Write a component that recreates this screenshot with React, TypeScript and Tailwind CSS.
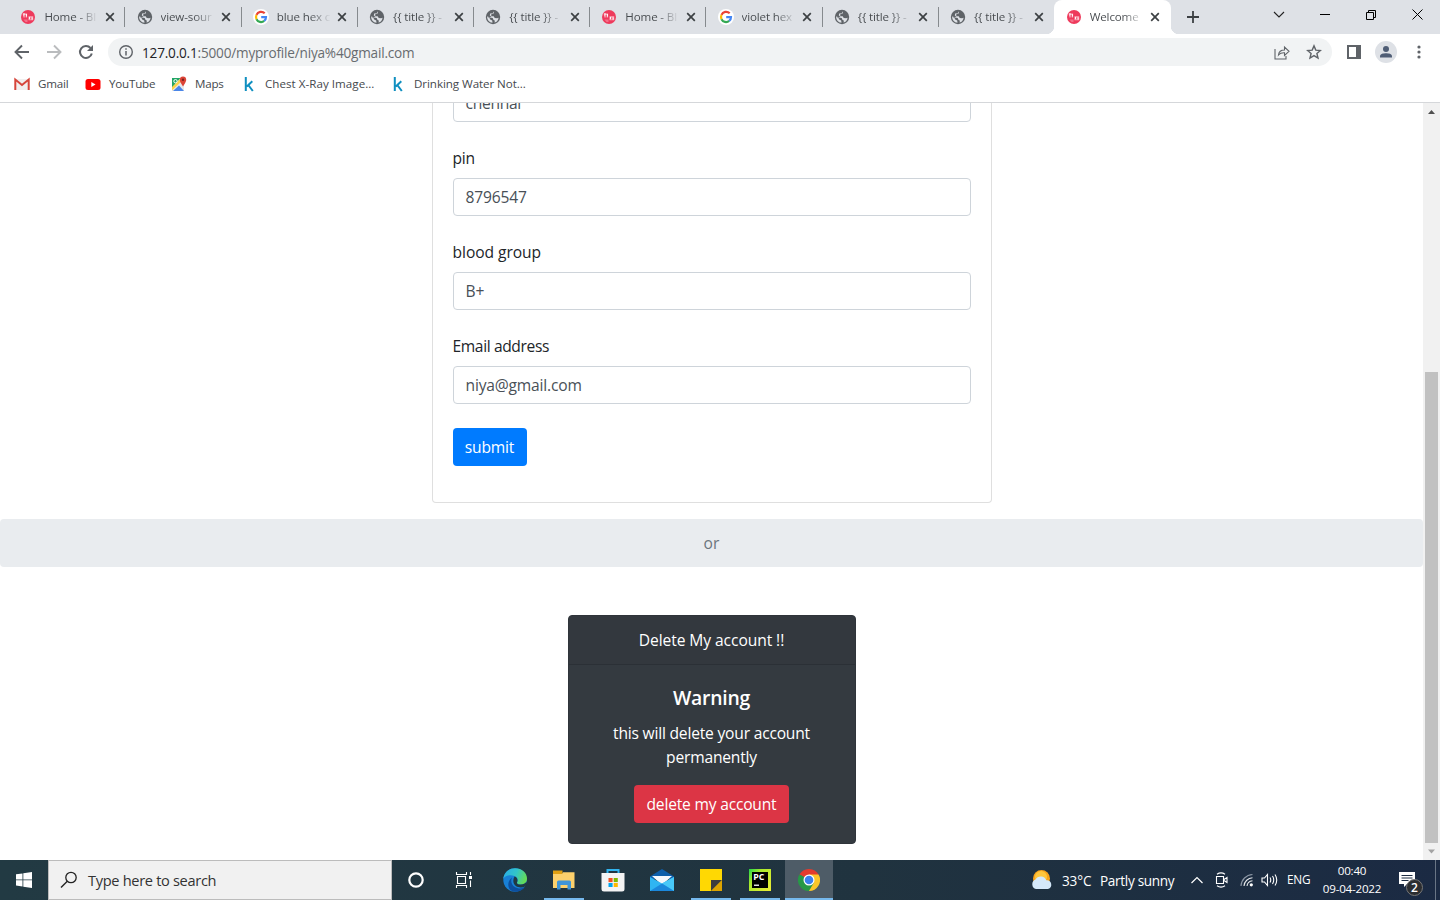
import React from "react";

type TabInfo = { icon: "blood" | "globe" | "google"; title: string; active?: boolean };

const tabs: TabInfo[] = [
  { icon: "blood", title: "Home - Bl" },
  { icon: "globe", title: "view-sour" },
  { icon: "google", title: "blue hex c" },
  { icon: "globe", title: "{{ title }} -" },
  { icon: "globe", title: "{{ title }} -" },
  { icon: "blood", title: "Home - Bl" },
  { icon: "google", title: "violet hex" },
  { icon: "globe", title: "{{ title }} -" },
  { icon: "globe", title: "{{ title }} -" },
  { icon: "blood", title: "Welcome", active: true },
];

function BloodIcon() {
  return (
    <svg width="16" height="16" viewBox="0 0 16 16">
      <circle cx="8" cy="8" r="7" fill="#ee3a5c" />
      <path d="M2.600 4.500h4.500v4H3.500zM8.500 7.300h4.700v4H8.500z" fill="#f9a9b9" />
      <path d="M4 4v2.500M6.500 5v2.500M9.500 8v2M12 8.500v2" stroke="#fff" strokeWidth="0.900" />
      <path d="M5.200 6v3M10.800 8.500v2" stroke="#ee3a5c" strokeWidth="0.900" />
      <path d="M3.500 10.500h4v2.500h-2z" fill="#f4708a" />
    </svg>
  );
}

function GlobeIcon() {
  return (
    <svg width="16" height="16" viewBox="0 0 16 16">
      <circle cx="8" cy="8" r="7.200" fill="#5f6368" />
      <path d="M8.800 2.200L7.800 4l-2.600.6-.4 1.900 1.300.8h2.600l1 1.700 2.400.3 1.500-.6Q13 12.500 9.500 13.600l.4-1.800-1.500-1.100-.7-1.700-2.600-.4-2.900-1.300Q1.800 9 3 11.200q2 2.500 4.500 2.600l-.3-2.200-2-1-.7-1.600-2-1.200 2.700.3 1-.5.200-2.800 2.400-.4z" fill="#dee1e6" />
    </svg>
  );
}

function GoogleIcon() {
  return (
    <svg width="16" height="16" viewBox="0 0 16 16">
      <circle cx="8" cy="8" r="8" fill="#fff" />
      <g fill="none" strokeWidth="2.200">
        <path d="M11.700 4.300A5 5 0 0 0 3.500 5.900" stroke="#ea4335" />
        <path d="M3.500 5.900a5 5 0 0 0 0 4.300" stroke="#fbbc05" />
        <path d="M3.500 10.200a5 5 0 0 0 7.700 1.700" stroke="#34a853" />
        <path d="M11.200 11.900A4.700 4.700 0 0 0 13 8.100H8.200" stroke="#4285f4" />
      </g>
    </svg>
  );
}

function CloseX() {
  return (
    <svg width="10" height="10" viewBox="0 0 10 10" className="shrink-0">
      <path d="M1.200 1.200l7.600 7.600M8.800 1.200L1.200 8.800" stroke="#3c4043" strokeWidth="1.700" />
    </svg>
  );
}

function Tab({ tab, last }: { tab: TabInfo; last: boolean }) {
  const icon = tab.icon === "blood" ? <BloodIcon /> : tab.icon === "globe" ? <GlobeIcon /> : <GoogleIcon />;
  return (
    <div className={tab.active ? "relative flex h-[34px] w-[117px] shrink-0 items-center rounded-t-lg bg-white pl-3" : "relative flex h-[34px] w-[116.2px] shrink-0 items-center pl-[12.4px]"}>
      <span className="shrink-0">{icon}</span>
      <span
        className={
          tab.active
            ? "ml-2 w-[51px] shrink-0 overflow-hidden whitespace-nowrap bg-linear-to-r from-[#45494d] from-65% to-[#e8e8e8] bg-clip-text text-[11.6px] leading-4 tracking-[-0.15px] text-transparent"
            : "ml-2 w-[54px] shrink-0 overflow-hidden whitespace-nowrap bg-linear-to-r from-[#45494d] from-60% to-[#dee1e6] to-100% bg-clip-text text-[11.6px] leading-4 tracking-[-0.15px] text-transparent"
        }
      >
        {tab.title}
      </span>
      <span className={tab.active ? "ml-[9px]" : "ml-[6.6px]"}>
        <CloseX />
      </span>
      {!tab.active && !last && <span className="-mr-[1.3px] ml-auto h-5 w-px bg-[#868a8e]" />}
      {tab.active && (
        <>
          <span className="absolute bottom-0 -left-2 size-2 bg-[radial-gradient(circle_at_0_0,#dee1e6_8px,#fff_8.5px)]" />
          <span className="absolute -right-2 bottom-0 size-2 bg-[radial-gradient(circle_at_100%_0,#dee1e6_8px,#fff_8.5px)]" />
        </>
      )}
    </div>
  );
}

function TabStrip() {
  return (
    <div className="flex h-[34px] shrink-0 bg-[#dee1e6] pl-2">
      {tabs.map((t, i) => (
        <Tab key={i} tab={t} last={i === 8} />
      ))}
      <div className="flex w-[44px] items-center justify-center">
        <svg width="12" height="12" viewBox="0 0 12 12">
          <path d="M6 0v12M0 6h12" stroke="#3c4043" strokeWidth="1.800" />
        </svg>
      </div>
      <div className="ml-auto flex h-[29px] items-center">
        <div className="flex w-[46px] justify-center">
          <svg width="12" height="8" viewBox="0 0 12 8">
            <path d="M1 1l5 5 5-5" fill="none" stroke="#222" strokeWidth="1.100" />
          </svg>
        </div>
        <div className="flex w-[46px] justify-center">
          <svg width="10" height="10" viewBox="0 0 10 10">
            <path d="M0 4.500h10" stroke="#000" />
          </svg>
        </div>
        <div className="flex w-[46px] justify-center">
          <svg width="10" height="10" viewBox="0 0 10 10">
            <path d="M.5 2.500h7v7h-7zM2.500 2.500v-2h7v7h-2" fill="none" stroke="#000" />
          </svg>
        </div>
        <div className="flex w-[46px] justify-center">
          <svg width="11" height="11" viewBox="0 0 11 11">
            <path d="M.5.5l10 10M10.500.5l-10 10" stroke="#000" />
          </svg>
        </div>
      </div>
    </div>
  );
}

function Toolbar() {
  return (
    <div className="flex h-9 shrink-0 items-center bg-white pl-[14px]">
      <svg width="16" height="16" viewBox="0 0 16 16">
        <path d="M15 8H2M8 1.500L1.500 8 8 14.500" fill="none" stroke="#5f6368" strokeWidth="1.900" />
      </svg>
      <svg width="16" height="16" viewBox="0 0 16 16" className="ml-4">
        <path d="M1 8h13M8 1.500L14.500 8 8 14.500" fill="none" stroke="#babcbe" strokeWidth="1.900" />
      </svg>
      <svg width="16" height="16" viewBox="0 0 16 16" className="ml-4">
        <path d="M13.800 9.500A6 6 0 1 1 12.500 4" fill="none" stroke="#5f6368" strokeWidth="2" />
        <path d="M15 1v6H9z" fill="#5f6368" />
      </svg>
      <div className="ml-[14px] flex h-7 w-[1224px] items-center rounded-full bg-[#f1f3f4] pr-[10px] pl-[10px]">
        <svg width="16" height="16" viewBox="0 0 16 16">
          <circle cx="8" cy="8" r="6.300" fill="none" stroke="#5f6368" strokeWidth="1.400" />
          <path d="M8 7v4.500M8 4.300v1.500" stroke="#5f6368" strokeWidth="1.500" />
        </svg>
        <span className="ml-2 pt-px text-[13.600px] leading-5 tracking-[-0.200px] text-[#686c70]">
          <span className="text-[#202124]">127.0.0.1</span>:5000/myprofile/niya%40gmail.com
        </span>
        <svg width="16" height="16" viewBox="0 0 16 16" className="ml-auto">
          <path d="M1 5v10h11v-3M4.500 11q.5-5 6-5V3l4.500 4.300-4.500 4.200V8.800Q6.500 8.600 4.500 11z" fill="none" stroke="#5f6368" strokeWidth="1.100" />
        </svg>
        <svg width="16" height="16" viewBox="0 0 16 16" className="ml-4">
          <path d="M8 1.900l1.800 4.200 4.600.4-3.500 3 1.100 4.500-4-2.400L4 14l1.100-4.500-3.500-3 4.600-.4z" fill="none" stroke="#5f6368" strokeWidth="1.400" />
        </svg>
      </div>
      <svg width="14" height="14" viewBox="0 0 14 14" className="ml-[15px]">
        <path d="M0 0h14v14H0zM2 2v10h7V2z" fillRule="evenodd" fill="#5f6368" />
      </svg>
      <svg width="22" height="22" viewBox="0 0 22 22" className="ml-[14px]">
        <circle cx="11" cy="11" r="11" fill="#dee1e6" />
        <circle cx="11" cy="8" r="3" fill="#4f5d75" />
        <path d="M5 16.500v-1.300C5 12.800 8.500 12.200 11 12.200s6 .6 6 3v1.300z" fill="#4f5d75" />
      </svg>
      <svg width="4" height="14" viewBox="0 0 4 14" className="ml-5">
        <g fill="#5f6368">
          <circle cx="2" cy="2" r="1.600" />
          <circle cx="2" cy="7" r="1.600" />
          <circle cx="2" cy="12" r="1.600" />
        </g>
      </svg>
    </div>
  );
}

function KIcon() {
  return (
    <svg width="16" height="16" viewBox="0 0 16 16">
      <path d="M4.800 1v14M11.300 5.300L5.800 10.500M7.300 9L11.800 15" fill="none" stroke="#0f8fc0" strokeWidth="2" />
    </svg>
  );
}

function Bookmarks() {
  return (
    <div className="flex h-[33px] shrink-0 items-center border-b border-[#d5d7da] bg-white pb-1 pl-[14px] text-[11.600px] tracking-[-0.200px] text-[#45494d]">
      <div className="flex w-[71px] items-center">
        <svg width="16" height="16" viewBox="0 0 16 16">
          <path d="M1 3h14v11H1z" fill="#f1efef" />
          <path d="M1.300 14V3.500L8 9l6.700-5.500V14" fill="none" stroke="#d6453b" strokeWidth="2" />
        </svg>
        <span className="ml-2">Gmail</span>
      </div>
      <div className="flex w-[87px] items-center">
        <svg width="16" height="16" viewBox="0 0 16 16">
          <rect x="0.500" y="3" width="15" height="11" rx="2.500" fill="#f00" />
          <path d="M6.300 6v5l4.200-2.500z" fill="#fff" />
        </svg>
        <span className="ml-2">YouTube</span>
      </div>
      <div className="flex w-[69px] items-center">
        <svg width="16" height="16" viewBox="0 0 16 16" className="-ml-px">
          <path d="M1 2h12v13H1z" fill="#e7e9ec" />
          <path d="M1 2h8.500L1 12z" fill="#22a565" />
          <path d="M2 15l6-5.500 5 5.500z" fill="#4a86e8" />
          <path d="M1 11l8-8 1.500 2.500L1 14.500z" fill="#fbd24d" />
          <circle cx="4.500" cy="5.200" r="1.700" fill="none" stroke="#fff" />
          <path d="M12 10.500Q8.800 6 8.800 3.800a3.200 3.400 0 0 1 6.400 0q0 2.200-3.200 6.700z" fill="#dc4437" />
          <circle cx="12" cy="3.800" r="1.200" fill="#7b231e" />
        </svg>
        <span className="ml-2">Maps</span>
      </div>
      <div className="flex w-[149px] items-center">
        <KIcon />
        <span className="ml-2 tracking-[0.030px]">Chest X-Ray Image...</span>
      </div>
      <div className="flex items-center">
        <KIcon />
        <span className="ml-2 tracking-[-0.070px]">Drinking Water Not...</span>
      </div>
    </div>
  );
}

function Field({ label, value, labelClass }: { label: string; value: string; labelClass: string }) {
  return (
    <div className="mt-6">
      <div className="mb-2 h-6 text-[15.600px] leading-6 text-[#212529]">
        <span className={labelClass}>{label}</span>
      </div>
      <div className="flex h-[38px] items-center rounded border border-[#ced4da] px-3 pt-0.5 text-[15.600px] tracking-[-0.180px] text-[#495057]">{value}</div>
    </div>
  );
}

function Page() {
  return (
    <div className="flex h-[757px] shrink-0 overflow-hidden bg-white">
      <div className="flex w-[1423px] flex-col items-center overflow-hidden">
        <div className="h-[400px] w-[560px] shrink-0 rounded-b border border-t-0 border-[#dfdfdf] px-5">
          <div className="-mt-[19px] flex h-[38px] items-center rounded border border-[#ced4da] px-3 pt-0.5 text-[15.600px] tracking-[-0.300px] text-[#495057]">chennai</div>
          <Field label="pin" value="8796547" labelClass="tracking-[-0.200px]" />
          <Field label="blood group" value="B+" labelClass="tracking-[-0.050px]" />
          <Field label="Email address" value="niya@gmail.com" labelClass="tracking-[-0.380px]" />
          <button className="mt-6 flex h-[38px] w-[74px] items-center justify-center rounded bg-[#007bff] pt-0.5 text-[15.600px] tracking-[-0.200px] text-white">submit</button>
        </div>
        <div className="mt-4 flex h-12 w-full shrink-0 items-center justify-center rounded bg-[#e9ecef] pt-0.5 text-[15.600px] text-[#6c757d]">or</div>
        <div className="mt-12 flex h-[229px] w-[288px] shrink-0 flex-col items-center rounded border border-[#2f343a] bg-[#343a40] text-[15.600px] leading-6 tracking-[-0.200px] text-white">
          <div className="flex h-[49px] w-full items-center justify-center rounded-t border-b border-[#2b3036] bg-[#33383e] tracking-[-0.080px]">Delete My account !!</div>
          <div className="mt-[21px] text-[19.400px] leading-6 font-semibold tracking-[-0.250px]">Warning</div>
          <div className="mt-[11px] w-[246px] text-center">this will delete your account permanently</div>
          <button className="mt-4 flex h-[38px] w-[155px] items-center justify-center rounded bg-[#dc3545]">delete my account</button>
        </div>
      </div>
      <div className="flex w-[17px] flex-col items-center bg-[#f1f1f1]">
        <svg width="17" height="17" viewBox="0 0 17 17">
          <path d="M5 11h7L8.500 7z" fill="#505050" />
        </svg>
        <div className="mt-[252px] h-[471px] w-[13px] bg-[#c1c1c1]" />
        <svg width="17" height="17" viewBox="0 0 17 17">
          <path d="M5 6.500h7L8.500 10.500z" fill="#a3a3a3" />
        </svg>
      </div>
    </div>
  );
}

function AppSlot({ children, open, active }: { children: React.ReactNode; open?: boolean; active?: boolean }) {
  return (
    <div className={active ? "ml-px flex h-10 w-12 flex-col items-center bg-[#4e5c67]" : "ml-px flex h-10 w-12 flex-col items-center"}>
      <div className="flex h-[38px] items-center pt-0.5">{children}</div>
      {active ? <div className="h-0.5 w-12 bg-[#76b9ed]" /> : open ? <div className="h-0.5 w-10 bg-[#76b9ed]" /> : null}
    </div>
  );
}

function Taskbar() {
  return (
    <div className="flex h-10 shrink-0 items-center bg-linear-to-r from-[#223a43] via-[#20333f] via-60% to-[#1b2a43] text-white">
      <div className="flex w-12 justify-center">
        <svg width="16" height="16" viewBox="0 0 16 16" fill="#fff">
          <path d="M0 2.300L6.500 1.400v6.100H0zM7.300 1.300L16 0v7.500H7.300zM0 8.300h6.500v6.200L0 13.600zM7.300 8.300H16V16l-8.700-1.300z" />
        </svg>
      </div>
      <div className="flex h-10 w-[344px] items-center border border-[#bcbcbc] bg-[#f1f1f1] pl-[11px]">
        <svg width="18" height="18" viewBox="0 0 18 18">
          <circle cx="11" cy="6.500" r="5.200" fill="none" stroke="#222" strokeWidth="1.300" />
          <path d="M7.300 10.200L1 16.500" stroke="#222" strokeWidth="1.400" />
        </svg>
        <span className="ml-[10px] pt-0.5 text-[14.600px] tracking-[-0.320px] text-[#333]">Type here to search</span>
      </div>
      <div className="flex w-12 justify-center">
        <svg width="16" height="16" viewBox="0 0 16 16">
          <circle cx="8" cy="8" r="6.700" fill="none" stroke="#fff" strokeWidth="2.200" />
        </svg>
      </div>
      <div className="flex w-[50px] pl-[15px]">
        <svg width="17" height="16" viewBox="0 0 17 16">
          <path d="M2.500 4.500h8v7h-8zM1.500 0v2.500h10V0M1.500 16v-2.500h10V16M15.500 0v3M15.500 8.500V15" fill="none" stroke="#fff" strokeWidth="1.100" />
          <path d="M14 4h3v3h-3z" fill="#fff" />
        </svg>
      </div>
      <AppSlot>
        <svg width="24" height="24" viewBox="0 0 24 24">
          <defs>
            <linearGradient id="edgeTop" x1="0" x2="1" y1="0.300" y2="0.600">
              <stop offset="0" stopColor="#2aaee6" />
              <stop offset="0.500" stopColor="#32c5c8" />
              <stop offset="1" stopColor="#68dd4e" />
            </linearGradient>
          </defs>
          <circle cx="12" cy="12" r="11.700" fill="#1880d6" />
          <path d="M.3 11C1 4 6 .2 12 .2c7 0 12 4.800 12 10.300 0 4-3 6-6.200 6-2.700 0-4.300-1-3.800-2 1.400-2.200.8-5.500-2.500-6.500C7 6.500 2 7.500.3 11z" fill="url(#edgeTop)" />
          <path d="M9 9.500c-2.300 5 1 10.500 7 10.900 2.500.2 4.500-.7 6-1.700C19 23 14 24.500 9.500 23.300 4 21 4 13 9 9.500z" fill="#0d4f9e" />
          <path d="M11.500 8.500c3 .5 3.500 4 2.500 6-.5 1 1 2 3.800 2 2.500 0 4.500-1 5.500-2.500q1 1.500-1 4.300-3 1.800-5.800 1c-5-.5-8-5.500-5-10.800z" fill="#203842" />
        </svg>
      </AppSlot>
      <AppSlot open>
        <svg width="22" height="20" viewBox="0 0 22 20">
          <path d="M0 0.500h9.500V5H0z" fill="#e1a012" />
          <path d="M0 4h9l1-1.700h11.500V18H0z" fill="#fdd16c" />
          <path d="M4 19.500V12q0-1.500 1.500-1.500h11Q18 10.500 18 12v7.500h-3.500V15h-7v4.500z" fill="#3f95d8" />
        </svg>
      </AppSlot>
      <AppSlot>
        <svg width="24" height="24" viewBox="0 0 24 24">
          <path d="M6.500 6V2h11v4" fill="none" stroke="#31b4ee" strokeWidth="2" />
          <path d="M.5 5h23v16q0 2.500-2.500 2.500H3Q.5 23.500.5 21z" fill="#f4f4f4" />
          <path d="M7.500 10h4.100v4.100H7.500z" fill="#f25022" />
          <path d="M12.700 10h4.100v4.100h-4.100z" fill="#7fba00" />
          <path d="M7.500 15h4.100v4H7.500z" fill="#00a4ef" />
          <path d="M12.700 15h4.100v4h-4.100z" fill="#ffb900" />
        </svg>
      </AppSlot>
      <AppSlot>
        <svg width="24" height="22" viewBox="0 0 24 22">
          <path d="M0 7.500L12 0l12 7.500V10H0z" fill="#0d5eaa" />
          <path d="M2 7h20l-10 9z" fill="#f4f8fc" />
          <path d="M0 8l12 6.500L24 8v14H0z" fill="#2fb5f2" />
          <path d="M12 14.500L24 8v14z" fill="#48c8f8" />
          <path d="M0 22l12-7.500L24 22z" fill="#1b88dc" />
        </svg>
      </AppSlot>
      <AppSlot open>
        <svg width="22" height="22" viewBox="0 0 22 22">
          <path d="M0 0h22v11L11 22H0z" fill="#ffd803" />
          <path d="M11 11h11L11 22z" fill="#3c3c3e" />
          <path d="M22 11v11H11z" fill="#dda300" />
        </svg>
      </AppSlot>
      <AppSlot open>
        <svg width="22" height="22" viewBox="0 0 22 22">
          <defs>
            <linearGradient id="pcEdge" x1="0" x2="1" y1="0" y2="0.800">
              <stop offset="0" stopColor="#21d749" />
              <stop offset="0.350" stopColor="#a8e92c" />
              <stop offset="1" stopColor="#e7ec35" />
            </linearGradient>
          </defs>
          <path d="M0 0h22v22H0z" fill="url(#pcEdge)" />
          <path d="M3 3h16v16H3z" fill="#000" />
          <text x="4.200" y="11.300" fill="#fff" fontSize="8.800" fontWeight="700" fontFamily="Open Sans, sans-serif">PC</text>
          <path d="M5 15.500h5V17H5z" fill="#ddd" />
        </svg>
      </AppSlot>
      <AppSlot active>
        <svg width="22" height="22" viewBox="0 0 22 22">
          <path d="M11 11L1.470 5.500A11 11 0 0 1 20.530 5.500z" fill="#e33b2e" />
          <path d="M11 11L1.470 5.500A11 11 0 0 0 11 22l4.800-8.200z" fill="#279847" />
          <path d="M11 11V5.500h9.530A11 11 0 0 1 11 22z" fill="#fcc629" />
          <path d="M6.200 13.800L1.470 5.500 11 11z" fill="#279847" />
          <path d="M11 22l4.800-8.200L11 11 6.200 13.800z" fill="#279847" />
          <circle cx="11" cy="11" r="5.500" fill="#fff" />
          <circle cx="11" cy="11" r="4.300" fill="#3b80ee" />
        </svg>
      </AppSlot>
      <div className="ml-auto flex h-10 items-center">
        <svg width="22" height="22" viewBox="0 0 22 22">
          <circle cx="10.500" cy="9.500" r="8.500" fill="#f9a31a" />
          <circle cx="10" cy="8" r="6" fill="#ffc63c" />
          <path d="M5 20a5 5 0 0 1-.5-9.500 6 6 0 0 1 10.800.7A4.500 4.500 0 0 1 17 20z" fill="#d5e9fa" />
        </svg>
        <span className="ml-[9px] w-[38px] pt-0.5 text-[13.600px] tracking-[-0.150px] whitespace-nowrap">33°C</span>
        <span className="w-[90px] pt-0.5 text-[13.600px] tracking-[-0.320px] whitespace-nowrap">Partly sunny</span>
        <svg width="14" height="8" viewBox="0 0 14 8">
          <path d="M1.500 7L7 1.500 12.500 7" fill="none" stroke="#fff" strokeWidth="1.200" />
        </svg>
        <svg width="14" height="16" viewBox="0 0 14 16" className="ml-[11px]">
          <path d="M1.500 4.500h7v7h-7zM9 7.500L12 5.500v5L9 8.500M2 2.200q4-2.600 8 0M2 13.800q4 2.600 8 0" fill="none" stroke="#fff" strokeWidth="1.100" />
        </svg>
        <svg width="14" height="14" viewBox="0 0 14 14" className="ml-[11px]">
          <g fill="none" strokeWidth="1.100">
            <path d="M1 13A12 12 0 0 1 12.500 1.500" stroke="#8c97a5" />
            <path d="M4 13a9 9 0 0 1 8.500-8.300M7 13a6 6 0 0 1 5.500-5.300" stroke="#e6e9ec" />
          </g>
          <circle cx="11.300" cy="11.800" r="1.600" fill="#fff" />
        </svg>
        <svg width="18" height="14" viewBox="0 0 18 14" className="ml-[7px]">
          <path d="M1 5h2.500l3-3.500v11L3.500 9H1zM9 4.500q1.500 2.500 0 5M11.500 3q2.500 4 0 8M14 1.500q3.500 5.500 0 11" fill="none" stroke="#fff" strokeWidth="1.100" />
        </svg>
        <span className="ml-2 w-[24px] text-[11.800px] tracking-[-0.200px] whitespace-nowrap">ENG</span>
        <div className="ml-[9px] flex w-[64px] flex-col items-center pb-px text-[11.600px] leading-[18px] tracking-[-0.220px]">
          <span>00:40</span>
          <span>09-04-2022</span>
        </div>
        <div className="relative ml-[15px] h-5 w-[36px]">
          <svg width="18" height="18" viewBox="0 0 18 18">
            <path d="M0 2h16v12H8l-3 3v-3H0z" fill="#fff" />
            <path d="M2.500 5.500h11M2.500 8h11M2.500 10.500h7" stroke="#1d2d43" />
          </svg>
          <span className="absolute top-[9px] left-[7px] flex size-[17px] items-center justify-center rounded-full border border-[#777] bg-[#2b2d30] text-[12px] leading-none font-semibold">2</span>
        </div>
        <div className="h-10 w-[5px] border-l border-[#697585]" />
      </div>
    </div>
  );
}

export default function App() {
  return (
    <div className="flex h-[900px] w-[1440px] flex-col overflow-hidden bg-white font-['Open_Sans','Noto_Sans',sans-serif]">
      <TabStrip />
      <Toolbar />
      <Bookmarks />
      <Page />
      <Taskbar />
    </div>
  );
}
